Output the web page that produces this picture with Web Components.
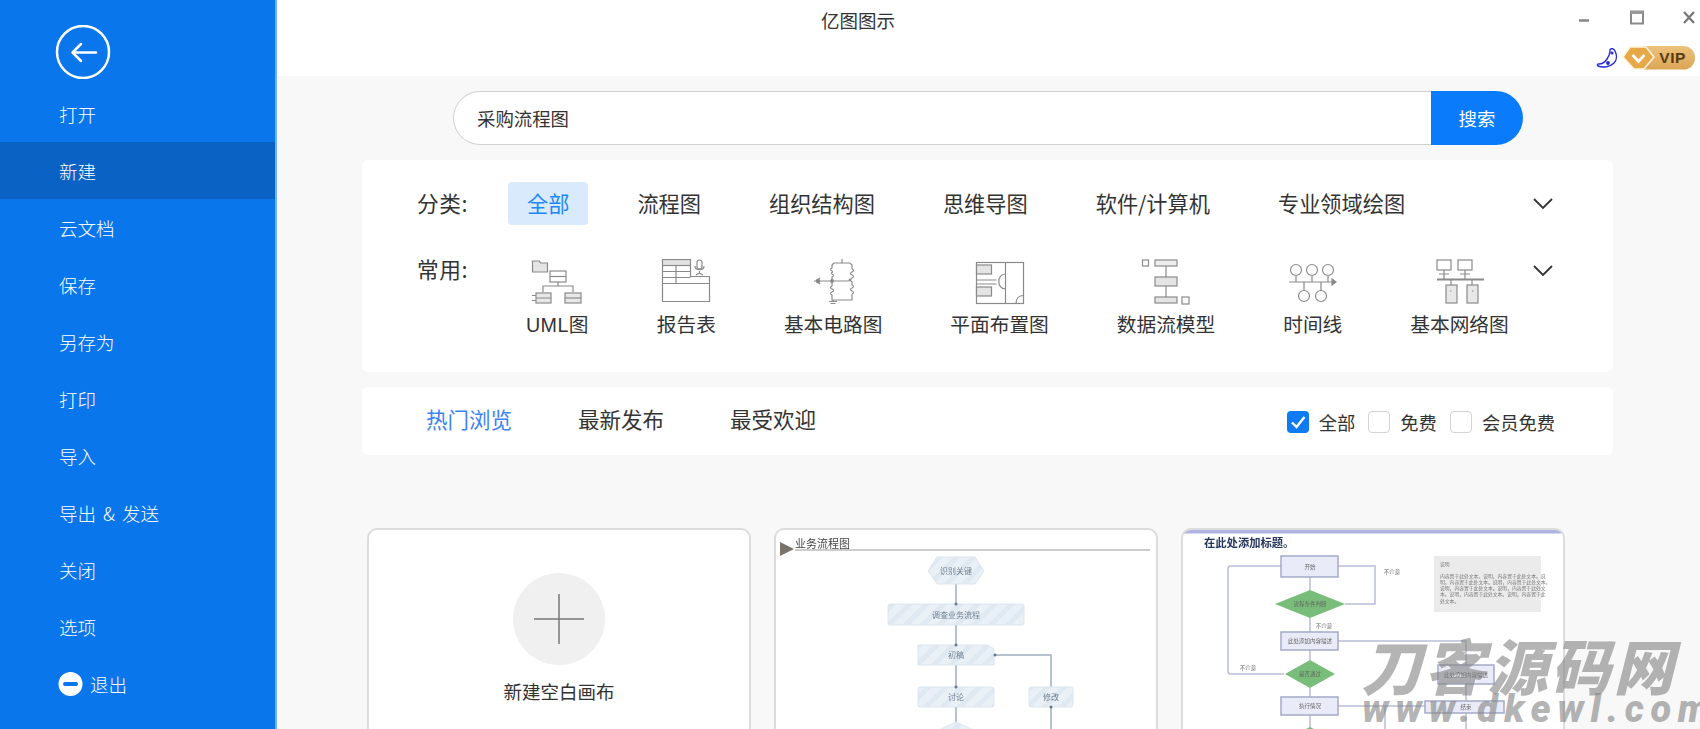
<!DOCTYPE html>
<html lang="zh">
<head>
<meta charset="UTF-8">
<title>亿图图示</title>
<style>
  html, body { margin: 0; height: 100%; overflow: hidden; background: #f8f8f8; }
  body { font-family: "Noto Sans CJK SC", "Noto Sans", sans-serif; color: #333; }
  app-shell { height: 729px; }
</style>
</head>
<body>

<app-shell>
  <side-nav slot="side">
    <nav-item>打开</nav-item>
    <nav-item active>新建</nav-item>
    <nav-item>云文档</nav-item>
    <nav-item>保存</nav-item>
    <nav-item>另存为</nav-item>
    <nav-item>打印</nav-item>
    <nav-item>导入</nav-item>
    <nav-item>导出 &amp; 发送</nav-item>
    <nav-item>关闭</nav-item>
    <nav-item>选项</nav-item>
    <nav-item exit>退出</nav-item>
  </side-nav>

  <title-bar>亿图图示</title-bar>

  <search-box value="采购流程图"></search-box>

  <filter-panel>
    <filter-chip active>全部</filter-chip>
    <filter-chip>流程图</filter-chip>
    <filter-chip>组织结构图</filter-chip>
    <filter-chip>思维导图</filter-chip>
    <filter-chip>软件/计算机</filter-chip>
    <filter-chip>专业领域绘图</filter-chip>

    <type-tile slot="common" style="letter-spacing:.4px">
      <svg slot="icon" width="52" height="46" viewBox="533 259 52 46" fill="none" stroke="#8a8a8a" stroke-width="1.2">
        <path d="M534.5 261h7l1 2h7v9h-15z" fill="#e4e4e4"/>
        <rect x="552" y="271" width="16" height="11"/><path d="M552 276.500h16" />
        <path d="M560 282v4M545 292v-6h30v6"/>
        <rect x="538" y="293" width="15" height="10" fill="#e8e8e8"/><path d="M538 298h15M534 295.500h4M534 300.500h4"/>
        <rect x="567" y="293" width="16" height="10" fill="#e8e8e8"/><path d="M567 298h16"/>
      </svg>
      UML图
    </type-tile>
    <type-tile slot="common">
      <svg slot="icon" width="50" height="46" viewBox="662 259 50 46" fill="none" stroke="#8a8a8a" stroke-width="1.2">
        <rect x="663.500" y="259.500" width="28" height="6" fill="#e2e2e2"/>
        <path d="M663.500 265.500v36h47v-25h-19v-11M663.500 271.500h28M663.500 277.500h28M677 265.500v18M663.500 283.500h47"/>
        <rect x="698" y="260" width="5" height="9" rx="2.500"/>
        <path d="M696 266c0 5 9 5 9 0M700.500 271v2M697 275l3.500-2 3.500 2"/>
      </svg>
      报告表
    </type-tile>
    <type-tile slot="common">
      <svg slot="icon" width="46" height="46" viewBox="810 259 46 46" fill="none" stroke="#8a8a8a" stroke-width="1.2">
        <path d="M842 259v4M834 263h16l2 2v4"/>
        <path d="M834 263l-2 2v3c-2 1-2 2 0 3s-2 2 0 3 2 2 0 3v4"/>
        <path d="M852 269c2 1 2 2 0 3s-2 2 0 3 2 2 0 3l-3 3"/>
        <path d="M814 281h35M820 278l-4 3 4 3"/>
        <circle cx="818" cy="281" r="1.600" fill="#8a8a8a"/><circle cx="832" cy="281" r="1.300" fill="#8a8a8a"/>
        <path d="M832 281v5c-2 1-2 2 0 3s2 2 0 3-2 2 0 3v5h20v-6c2-1 2-2 0-3s-2-2 0-3 2-2 0-3v-3l-3-3"/>
        <path d="M833 300v1M829 301.500h8M830.500 303.500h5"/>
      </svg>
      基本电路图
    </type-tile>
    <type-tile slot="common">
      <svg slot="icon" width="50" height="46" viewBox="975 259 50 46" fill="none" stroke="#8a8a8a" stroke-width="1.2">
        <rect x="976.500" y="262.500" width="47" height="41"/>
        <path d="M1005.500 262.500v41"/>
        <rect x="976.500" y="265" width="15" height="9" fill="#e4e4e4"/>
        <rect x="976.500" y="287" width="15" height="9" fill="#e4e4e4"/>
        <path d="M976.500 280h20M976.500 284h20M1005.500 274c-9 0-9 15 0 15M1016 303.500c0-5 3-8 7.500-8"/>
      </svg>
      平面布置图
    </type-tile>
    <type-tile slot="common">
      <svg slot="icon" width="50" height="46" viewBox="1142 259 50 46" fill="none" stroke="#8a8a8a" stroke-width="1.2">
        <rect x="1143.500" y="260" width="6" height="6"/>
        <rect x="1156" y="260" width="22" height="6" fill="#eeeeee"/>
        <path d="M1167 266v11"/>
        <rect x="1156" y="277" width="22" height="9" fill="#e4e4e4"/>
        <path d="M1167 286v11"/>
        <rect x="1156" y="297" width="22" height="6" fill="#e4e4e4"/>
        <rect x="1183" y="297" width="7" height="7"/>
      </svg>
      数据流模型
    </type-tile>
    <type-tile slot="common">
      <svg slot="icon" width="50" height="46" viewBox="1289 259 50 46" fill="none" stroke="#8a8a8a" stroke-width="1.2">
        <circle cx="1297" cy="270" r="5.500"/><circle cx="1313" cy="270" r="5.500"/><circle cx="1329" cy="270" r="5.500"/>
        <path d="M1297 276v6M1313 276v6M1329 276v6M1290 282h45"/>
        <path d="M1333 279l4 3-4 3z" fill="#8a8a8a"/>
        <path d="M1305 282v8M1322 282v8"/>
        <circle cx="1305" cy="296" r="5.500"/><circle cx="1322" cy="296" r="5.500"/>
      </svg>
      时间线
    </type-tile>
    <type-tile slot="common">
      <svg slot="icon" width="50" height="46" viewBox="1435 259 50 46" fill="none" stroke="#8a8a8a" stroke-width="1.2">
        <rect x="1437" y="260" width="14" height="10"/><rect x="1458" y="260" width="14" height="10"/>
        <path d="M1444 270v9M1465 270v9M1439 274h10M1460 274h10"/>
        <path d="M1437 279.500h47" stroke-width="2"/>
        <path d="M1451 280v6M1472 280v6"/>
        <rect x="1446" y="285" width="11" height="18" fill="#e8e8e8"/><rect x="1467" y="285" width="11" height="18" fill="#e8e8e8"/>
        <path d="M1450 291h1.500M1472 291h1.500"/>
      </svg>
      基本网络图
    </type-tile>
  </filter-panel>

  <tab-bar>
    <tab-link active>热门浏览</tab-link>
    <tab-link>最新发布</tab-link>
    <tab-link>最受欢迎</tab-link>
    <check-option slot="right" checked>全部</check-option>
    <check-option slot="right">免费</check-option>
    <check-option slot="right">会员免费</check-option>
  </tab-bar>

  <card-grid>
    <blank-card>新建空白画布</blank-card>
    <template-card>
      <svg width="380" height="300" viewBox="776 530 380 300" font-family="Noto Sans CJK SC, sans-serif" style="filter:blur(.6px)">
        <defs>
          <pattern id="hatch" width="12" height="12" patternUnits="userSpaceOnUse" patternTransform="rotate(45)">
            <rect width="12" height="12" fill="#e9f0f6"/><rect width="5" height="12" fill="#dfe9f2"/>
          </pattern>
        </defs>
        <path d="M780 542l14 7-14 7z" fill="#7a736a"/>
        <text x="795" y="548" font-size="11" fill="#444">业务流程图</text>
        <path d="M795 550h355" stroke="#999" fill="none"/>
        <g fill="none" stroke="#9db0c2" stroke-width="1.500">
          <path d="M956 584v20M956 625v20M956 665v22M956 707v15M1051 729v-22M1051 687v-32H996"/>
        </g>
        <g fill="url(#hatch)" stroke="#dde6ee">
          <path d="M937 557h38l9 14-9 13h-38l-9-13z"/>
          <rect x="888" y="604" width="136" height="21" rx="2"/>
          <path d="M918 645h70l6 4v16h-76z"/>
          <rect x="918" y="687" width="76" height="20" rx="2"/>
          <rect x="1029" y="687" width="44" height="20" rx="2"/>
          <path d="M956 722l30 14h-60z"/>
        </g>
        <g font-size="8" fill="#6f7f90" text-anchor="middle">
          <text x="956" y="574">识别关键</text>
          <text x="956" y="618">调查业务流程</text>
          <text x="956" y="658">初稿</text>
          <text x="956" y="700">讨论</text>
          <text x="1051" y="700">修改</text>
        </g>
        <g fill="#66788c"><circle cx="956" cy="604" r="1.500"/><circle cx="956" cy="645" r="1.500"/><circle cx="956" cy="687" r="1.500"/><circle cx="995" cy="655" r="1.500"/><circle cx="1051" cy="707" r="1.500"/></g>
      </svg>
    </template-card>
    <template-card>
      <svg width="380" height="300" viewBox="1184 530 380 300" font-family="Noto Sans CJK SC, sans-serif" style="filter:blur(.6px)">
        <rect x="1184" y="530" width="380" height="3.500" fill="#b0b4e2"/>
        <text x="1205" y="547" font-size="11.300" font-weight="700" fill="#26355e">在此处添加标题。</text>
        <g fill="none" stroke="#b9bfd6" stroke-width="1.500">
          <path d="M1282 566h-50q-3 0-3 3v102q0 3 3 3h53M1339 566h37v38h-30M1311 577v13M1311 618v14M1311 650v10M1311 688v9M1311 715v14"/>
          <path d="M1339 641h128v24M1467 684v17M1339 706h87M1467 713v16M1386 706v23"/>
        </g>
        <g fill="#e9ecf8" stroke="#a5abc9" stroke-width="1.500">
          <rect x="1282" y="556" width="57" height="21"/>
          <rect x="1282" y="632" width="57" height="18"/>
          <rect x="1282" y="697" width="57" height="18"/>
          <rect x="1439" y="665" width="56" height="19"/>
          <rect x="1426" y="701" width="79" height="12"/>
        </g>
        <path d="M1311 590l35 14-35 14-35-14zM1311 660l25 14-25 14-25-14zM1311 727l12 6h-24z" fill="#79bd7a"/>
        <rect x="1435" y="556" width="107" height="56" fill="#ebebeb"/>
        <g font-size="5.500" fill="#666" text-anchor="middle">
          <text x="1311" y="569">开始</text>
          <text x="1311" y="606">流程条件判断</text>
          <text x="1311" y="643">此处添加内容描述</text>
          <text x="1311" y="676">是否通过</text>
          <text x="1311" y="708">执行情况</text>
          <text x="1467" y="677">此处添加内容描述</text>
          <text x="1467" y="709">结束</text>
          <text x="1393" y="574">不介意</text>
          <text x="1325" y="628">不介意</text>
          <text x="1249" y="670">不介意</text>
        </g>
        <g font-size="4.800" fill="#777">
          <text x="1441" y="566">说明</text>
          <text x="1441" y="578">内容置于此处文本。说明，内容置于此处文本。说</text>
          <text x="1441" y="584">明，内容置于此处文本。说明，内容置于此处文本。</text>
          <text x="1441" y="590">说明，内容置于此处文本。说明，内容置于此处文</text>
          <text x="1441" y="596">本。说明，内容置于此处文本。说明，内容置于此</text>
          <text x="1441" y="603">处文本。</text>
        </g>
      </svg>
    </template-card>
  </card-grid>

  <water-mark slot="over"></water-mark>
</app-shell>

<script>
  // 小工具: 用模板字符串定义一个只有静态 shadow 的组件
  function define(name, html) {
    customElements.define(name, class extends HTMLElement {
      constructor() {
        super()
        this.attachShadow({mode: 'open'}).innerHTML = html
      }
    })
  }

  define('app-shell', `
    <style>
      :host { display: flex; position: relative; overflow: hidden; width: 1700px; }
      .main { flex: 1; min-width: 0; background: #f8f8f8; }
    </style>
    <slot name="side"></slot>
    <div class="main"><slot></slot></div>
    <slot name="over"></slot>
  `)

  define('side-nav', `
    <style>
      :host { display: block; flex: none; width: 275px; height: 100%; background: #0a76ec;
              border-right: 2px solid #6fb0f7; box-sizing: content-box; color: #fff; }
      .back { display: block; margin: 25px 0 6px 55px; }
    </style>
    <svg class="back" width="56" height="54" viewBox="0 0 56 54" fill="none" stroke="#fff">
      <circle cx="28" cy="27" r="26" stroke-width="2.500"/>
      <path d="M41 27.500H18M26 19l-8.500 8.500L26 36" stroke-width="2.500" stroke-linecap="round" stroke-linejoin="round"/>
    </svg>
    <slot></slot>
  `)

  customElements.define('nav-item', class extends HTMLElement {
    constructor() {
      super()
      const exit = this.hasAttribute('exit')
      this.attachShadow({mode: 'open'}).innerHTML = `
        <style>
          :host { display: flex; align-items: center; gap: 7px; height: 57px; padding-left: 59px;
                  font-size: 18.500px; font-weight: 300; color: #fff; word-spacing: 3px; }
          :host([active]) { background: #0a62c4; }
          svg { margin-left: -1px; }
        </style>
        ${exit ? `<svg width="25" height="24" viewBox="0 0 25 24"><circle cx="12.500" cy="12" r="12" fill="#fff"/><rect x="5" y="10" width="15" height="4" rx="2" fill="#0a76ec"/></svg>` : ''}
        <slot></slot>`
    }
  })

  define('title-bar', `
    <style>
      :host { display: flex; justify-content: space-between; height: 76px; background: #fff;
              box-sizing: border-box; padding: 6px 0 0 544px; font-size: 18.500px; line-height: 28px; color: #333; }
      .right { display: flex; flex-direction: column; align-items: flex-end; margin-top: 4px; margin-right: 5px; }
      .win { display: flex; align-items: flex-start; }
      .win svg { display: block; }
      .vip { display: flex; align-items: center; margin-top: 19px; }
      .vip svg { display: block; }
      .moon { margin-top: 2px; }
      .pill { position: relative; margin-left: 4px; width: 73px; height: 25px; }
      .pill span { position: absolute; right: 9px; top: 0; font: 700 15.500px/25px "Liberation Sans", sans-serif; color: #5a3a10; letter-spacing: .6px; }
    </style>
    <slot></slot>
    <div class="right">
      <div class="win">
        <svg width="122" height="16" viewBox="0 0 122 16" fill="none">
          <path d="M6 10.500h10" stroke="#888" stroke-width="2.500"/>
          <rect x="58" y="1.500" width="12" height="12" stroke="#8a8a8a" stroke-width="2"/>
          <path d="M58 2.500h12" stroke="#999" stroke-width="3"/>
          <path d="M111 2l10 11M121 2l-10 11" stroke="#777" stroke-width="2.200"/>
        </svg>
      </div>
      <div class="vip">
        <svg class="moon" width="22" height="21" viewBox="0 0 22 21" fill="none" stroke="#2a2ad8" stroke-width="1.400">
          <path d="M15 1c1-1 3 0 4 2 2 4 2 9-1 12-4 4-11 5-16 3-1-1-1-2 1-2 3 0 6-2 8-5 2-3 3-6 3-8 0-1 0-2 1-2z" fill="#fff"/>
          <circle cx="16" cy="5" r=".9" fill="#2a2ad8"/><circle cx="12" cy="15" r="1.200" fill="#2a2ad8"/>
        </svg>
        <div class="pill">
          <svg width="73" height="25" viewBox="0 0 73 25">
            <defs><linearGradient id="g" x1="0" x2="0" y1="0" y2="1"><stop offset="0" stop-color="#ecc27c"/><stop offset="1" stop-color="#dca556"/></linearGradient></defs>
            <rect x="12" y="1" width="61" height="23.500" rx="11.500" fill="url(#g)"/>
            <path d="M8 2h16l8 10-10 12H12L1 12z" fill="#e7a948" stroke="#fff3dc" stroke-width="1.600"/>
            <path d="M10.500 10l6 6.500 6-6.500" fill="none" stroke="#fff" stroke-width="2.800"/>
          </svg>
          <span>VIP</span>
        </div>
      </div>
    </div>
  `)

  customElements.define('search-box', class extends HTMLElement {
    constructor() {
      super()
      const val = this.getAttribute('value') || ''
      this.attachShadow({mode: 'open'}).innerHTML = `
        <style>
          :host { display: flex; height: 54px; margin: 15px 177px 0 176px; background: #fff; border-radius: 27px; font-size: 18.400px; }
          .input { flex: 1; box-sizing: border-box; border: 1.500px solid #d0d0d0; border-right: 0; border-radius: 27px 0 0 27px;
                   padding-left: 23px; line-height: 53px; color: #333; }
          .btn { flex: none; width: 92px; background: #0a7bfb; color: #fff; border-radius: 0 27px 27px 0; line-height: 54px; text-align: center; }
        </style>
        <div class="input">${val}</div><div class="btn">搜索</div>`
    }
  })

  define('filter-panel', `
    <style>
      :host { display: block; margin: 15px 87px 0 85px; background: #fff; border-radius: 6px; padding: 22px 60px 33px 55px; }
      .row { display: flex; align-items: flex-start; }
      .row + .row { margin-top: 34px; }
      .label { flex: none; width: 91px; font-size: 21.700px; line-height: 41px; color: #333; letter-spacing: .5px; }
      .row.two .label { line-height: 24px; margin-top: -2px; }
      .items { display: flex; gap: 30px; }
      .row.two .items { gap: 68px; margin-left: 18px; }
      .more { margin-left: auto; flex: none; margin-top: 16px; }
      .row.two .more { margin-top: 6px; }
      .more svg { display: block; }
    </style>
    <div class="row">
      <div class="label">分类:</div>
      <div class="items"><slot></slot></div>
      <div class="more"><svg width="20" height="12" viewBox="0 0 20 12" fill="none" stroke="#333" stroke-width="1.800"><path d="M1 1l9 9 9-9"/></svg></div>
    </div>
    <div class="row two">
      <div class="label">常用:</div>
      <div class="items"><slot name="common"></slot></div>
      <div class="more"><svg width="20" height="12" viewBox="0 0 20 12" fill="none" stroke="#333" stroke-width="1.800"><path d="M1 1l9 9 9-9"/></svg></div>
    </div>
  `)

  define('filter-chip', `
    <style>
      :host { display: block; height: 43px; line-height: 41px; padding: 0 19px; border-radius: 4px; font-size: 21.200px; color: #333; white-space: nowrap; }
      :host([active]) { background: #d8eafc; color: #1e88f5; }
    </style>
    <slot></slot>
  `)

  define('type-tile', `
    <style>
      :host { display: flex; flex-direction: column; align-items: center; font-family: "Liberation Sans", "Noto Sans CJK SC", sans-serif;
              font-size: 19.700px; line-height: 28px; color: #333; white-space: nowrap; }
      ::slotted(svg) { display: block; margin-bottom: 6px; }
    </style>
    <slot name="icon"></slot>
    <slot></slot>
  `)

  define('tab-bar', `
    <style>
      :host { display: flex; align-items: center; justify-content: space-between; height: 68px;
              margin: 15px 87px 0 85px; padding: 0 58px 0 64px; background: #fff; border-radius: 6px; }
      .tabs { display: flex; gap: 66px; margin-top: -4px; }
      .opts { display: flex; gap: 13px; margin-top: 1px; }
    </style>
    <div class="tabs"><slot></slot></div>
    <div class="opts"><slot name="right"></slot></div>
  `)

  define('tab-link', `
    <style>
      :host { display: block; font-size: 21.500px; line-height: 30px; color: #333; }
      :host([active]) { color: #3d82f5; }
    </style>
    <slot></slot>
  `)

  customElements.define('check-option', class extends HTMLElement {
    constructor() {
      super()
      const on = this.hasAttribute('checked')
      this.attachShadow({mode: 'open'}).innerHTML = `
        <style>
          :host { display: flex; align-items: center; gap: 10px; font-size: 18.300px; line-height: 24px; color: #333; }
          .box { box-sizing: border-box; width: 22px; height: 22px; border-radius: 4px; border: 1.500px solid #d4d4d8; background: #fff; }
          .box.on { border: 0; background: #0f7bf2; }
          svg { display: block; }
        </style>
        <div class="box ${on ? 'on' : ''}">${on ? `<svg width="22" height="22" viewBox="0 0 22 22" fill="none"><path d="M5 11.500l4.500 4.500 8-10" stroke="#fff" stroke-width="2.400"/></svg>` : ''}</div>
        <slot></slot>`
    }
  })

  define('card-grid', `
    <style>
      :host { display: grid; grid-template-columns: repeat(3, 384px); gap: 23px; margin: 73px 0 0 90px; }
    </style>
    <slot></slot>
  `)

  define('blank-card', `
    <style>
      :host { display: flex; flex-direction: column; align-items: center; box-sizing: border-box; height: 304px;
              background: #fff; border: 2px solid #dcdcdc; border-radius: 10px; padding-top: 43px;
              font-size: 18.500px; color: #333; }
      .plus { width: 92px; height: 92px; border-radius: 50%; background: #f0f0f0; margin-bottom: 13px; }
      svg { display: block; }
    </style>
    <div class="plus">
      <svg width="92" height="92" viewBox="0 0 92 92" stroke="#777" stroke-width="1.500"><path d="M21 46h50M46 21v50"/></svg>
    </div>
    <slot></slot>
  `)

  define('template-card', `
    <style>
      :host { display: block; box-sizing: border-box; height: 304px; background: #fff; border: 2px solid #dcdcdc; border-radius: 10px; overflow: hidden; }
      ::slotted(svg) { display: block; }
    </style>
    <slot></slot>
  `)

  define('water-mark', `
    <style>
      :host { display: block; position: absolute; left: 1368px; top: 632px; width: 330px; color: rgba(130,130,130,.6); pointer-events: none; }
      .cn { font: 900 60px/64px "Noto Sans CJK SC", sans-serif; transform: skewX(-14deg); white-space: nowrap; letter-spacing: 3px; }
      .en { font: italic 900 38px/36px Roboto, sans-serif; white-space: nowrap; letter-spacing: 6.500px; margin: -5px 0 0 -6px; }
    </style>
    <div class="cn">刀客源码网</div>
    <div class="en">www.dkewl.com</div>
  `)
</script>
</body>
</html>
